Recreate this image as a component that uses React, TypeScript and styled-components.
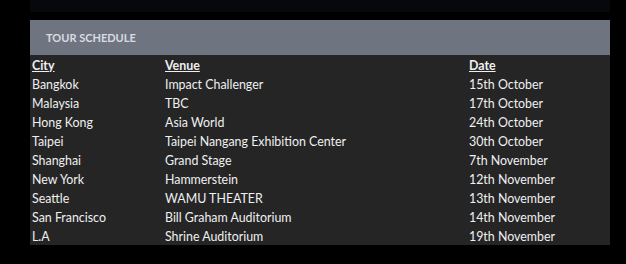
import styled, { createGlobalStyle } from 'styled-components';

const GlobalStyle = createGlobalStyle`
  html, body {
    margin: 0;
    padding: 0;
    background: #000;
  }
  body {
    font-family: Lato, 'Liberation Sans', sans-serif;
  }
`;

type Show = { city: string; venue: string; date: string };

const shows: Show[] = [
  { city: 'Bangkok', venue: 'Impact Challenger', date: '15th October' },
  { city: 'Malaysia', venue: 'TBC', date: '17th October' },
  { city: 'Hong Kong', venue: 'Asia World', date: '24th October' },
  { city: 'Taipei', venue: 'Taipei Nangang Exhibition Center', date: '30th October' },
  { city: 'Shanghai', venue: 'Grand Stage', date: '7th November' },
  { city: 'New York', venue: 'Hammerstein', date: '12th November' },
  { city: 'Seattle', venue: 'WAMU THEATER', date: '13th November' },
  { city: 'San Francisco', venue: 'Bill Graham Auditorium', date: '14th November' },
  { city: 'L.A', venue: 'Shrine Auditorium', date: '19th November' },
];

function App() {
  return (
    <>
      <GlobalStyle />
      <Page>
        <TopStrip />
        <Panel>
          <PanelHeader>TOUR SCHEDULE</PanelHeader>
          <Table>
            <Row>
              <HeadCell>City</HeadCell>
              <HeadCell>Venue</HeadCell>
              <HeadCell>Date</HeadCell>
            </Row>
            {shows.map((s) => (
              <Row key={s.city}>
                <Cell>{s.city}</Cell>
                <Cell>{s.venue}</Cell>
                <Cell>{s.date}</Cell>
              </Row>
            ))}
          </Table>
        </Panel>
      </Page>
    </>
  );
}

const Page = styled.div`
  width: 626px;
  height: 264px;
  padding: 0 16px 0 30px;
  box-sizing: border-box;
  display: flex;
  flex-direction: column;
  gap: 8px;
`;

const TopStrip = styled.div`
  height: 12px;
  background: #07080b;
`;

const Panel = styled.section`
  display: flex;
  flex-direction: column;
`;

const PanelHeader = styled.div`
  height: 35px;
  background: #6e7580;
  color: #d8dce2;
  font-weight: 700;
  font-size: 11px;
  display: flex;
  align-items: center;
  padding-left: 16px;
`;

const Table = styled.div`
  background: #252526;
  display: flex;
  flex-direction: column;
`;

const Row = styled.div`
  display: grid;
  grid-template-columns: 133px 304px 1fr;
  height: 19px;
  box-sizing: border-box;
  padding: 1px 0 0 2px;
  align-items: center;
`;

const Cell = styled.span`
  color: #f0f0f0;
  font-size: 12.4px;
  white-space: nowrap;
`;

const HeadCell = styled(Cell)`
  font-weight: 700;
  text-decoration: underline;
`;

export default App;
